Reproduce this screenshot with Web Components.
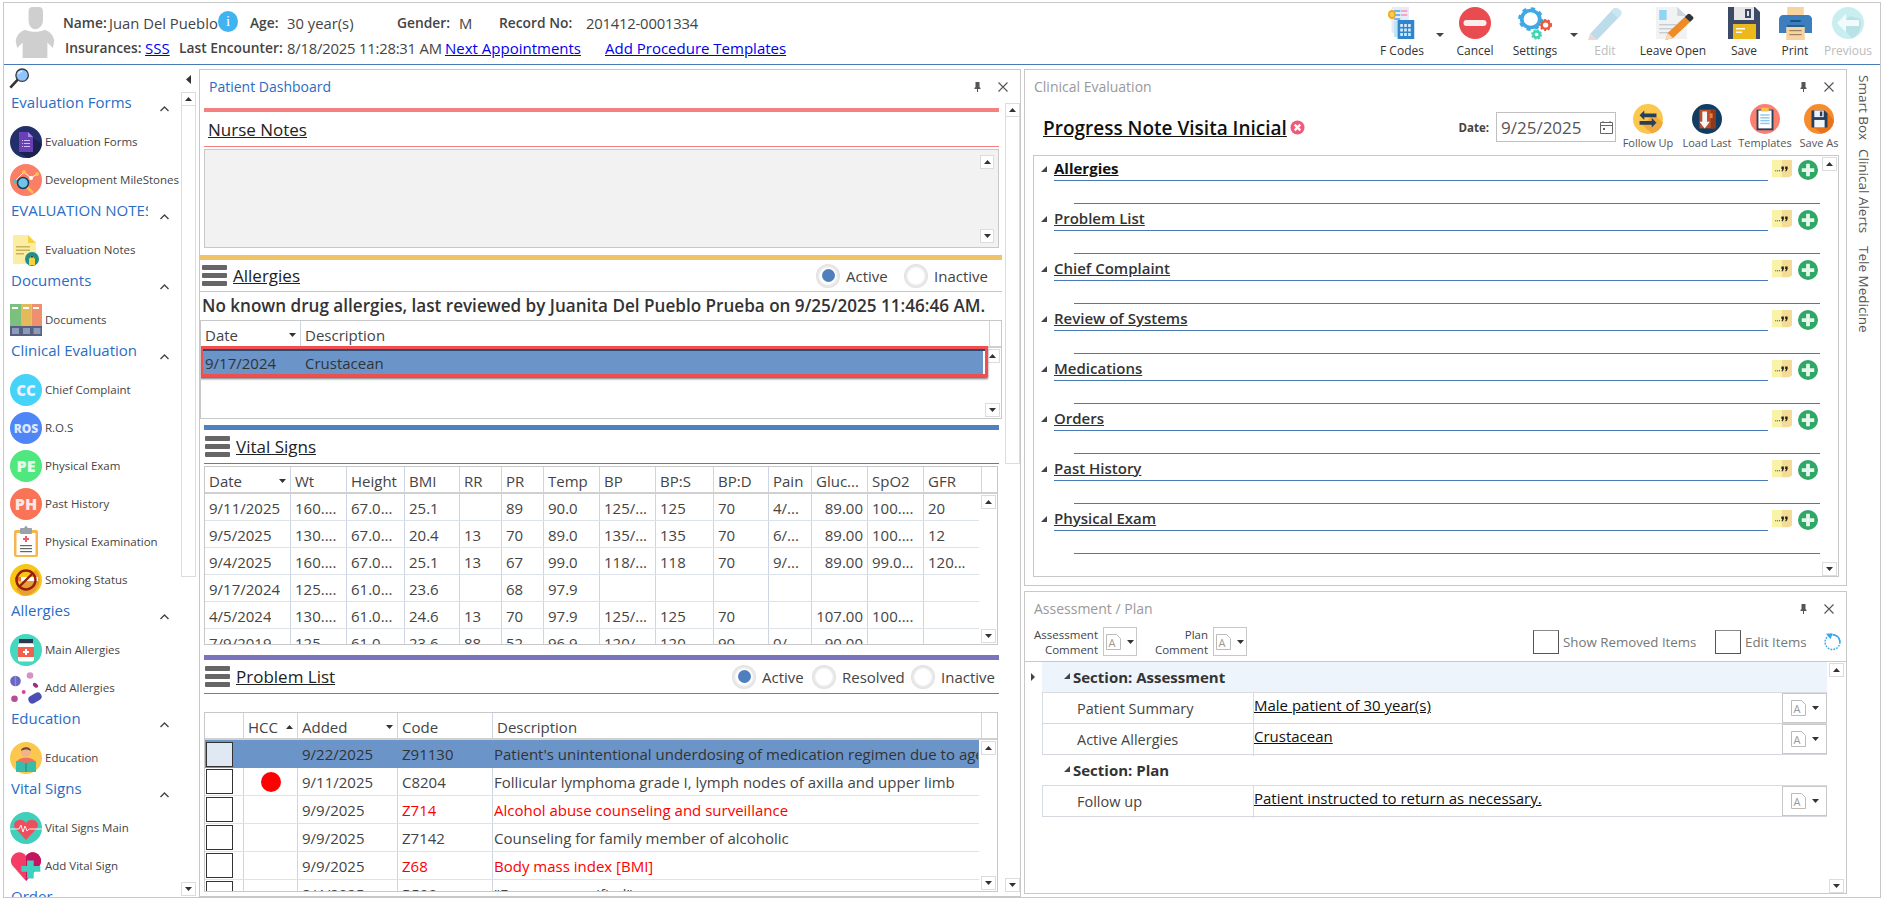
<!DOCTYPE html>
<html>
<head>
<meta charset="utf-8">
<title>Patient Dashboard</title>
<style>
  html, body { margin: 0; padding: 0; background: #fff; }
  body { font-family: "Open Sans", "Liberation Sans", sans-serif; color: #444; width: 1882px; height: 903px; overflow: hidden; }
</style>
</head>
<body>
<app-shell>
  <patient-header slot="header"></patient-header>
  <side-nav slot="nav">
    <nav-group title="Evaluation Forms">
      <nav-item icon="evalforms">Evaluation Forms</nav-item>
      <nav-item icon="milestones">Development MileStones</nav-item>
    </nav-group>
    <nav-group title="EVALUATION NOTES">
      <nav-item icon="notes">Evaluation Notes</nav-item>
    </nav-group>
    <nav-group title="Documents">
      <nav-item icon="docs">Documents</nav-item>
    </nav-group>
    <nav-group title="Clinical Evaluation">
      <nav-item icon="cc">Chief Complaint</nav-item>
      <nav-item icon="ros">R.O.S</nav-item>
      <nav-item icon="pe">Physical Exam</nav-item>
      <nav-item icon="ph">Past History</nav-item>
      <nav-item icon="clip">Physical Examination</nav-item>
      <nav-item icon="smoke">Smoking Status</nav-item>
    </nav-group>
    <nav-group title="Allergies">
      <nav-item icon="bottle">Main Allergies</nav-item>
      <nav-item icon="pills">Add Allergies</nav-item>
    </nav-group>
    <nav-group title="Education">
      <nav-item icon="edu">Education</nav-item>
    </nav-group>
    <nav-group title="Vital Signs">
      <nav-item icon="vital">Vital Signs Main</nav-item>
      <nav-item icon="addvital">Add Vital Sign</nav-item>
    </nav-group>
    <nav-group title="Order"></nav-group>
  </side-nav>

  <dock-panel slot="center" title="Patient Dashboard" active style="height:828px">
    <patient-dashboard></patient-dashboard>
  </dock-panel>

  <div slot="right" style="display:flex;flex-direction:column;gap:5px">
    <dock-panel title="Clinical Evaluation" style="height:517px">
      <clinical-eval></clinical-eval>
    </dock-panel>
    <dock-panel title="Assessment / Plan" style="height:303px">
      <assessment-plan></assessment-plan>
    </dock-panel>
  </div>

  <side-tabs slot="tabs"></side-tabs>
</app-shell>

<script>
const ICONS = {
  evalforms: `<circle cx="16" cy="16" r="16" fill="#232e6b"/><path d="M23 12L32 18A16 16 0 0 1 18 32L9 26Z" fill="#1a2250"/><path d="M9 6h9l5 5v15H9z" fill="#6a3fb8"/><path d="M18 6l5 5h-5z" fill="#a58ae6"/><g fill="#cfc3f0"><rect x="14" y="14" width="6" height="1"/><rect x="14" y="17" width="6" height="1"/><rect x="14" y="20" width="6" height="1"/><rect x="12" y="14" width="1" height="1"/><rect x="12" y="17" width="1" height="1"/><rect x="12" y="20" width="1" height="1"/></g>`,
  milestones: `<circle cx="16" cy="16" r="16" fill="#fa7f66"/><polyline points="5,17 14,8 21,14 27,10" fill="none" stroke="#fff" stroke-width="1"/><circle cx="5" cy="17" r="2" fill="#3fc7c0"/><circle cx="14" cy="8" r="2" fill="#f6c34d"/><circle cx="21" cy="14" r="2" fill="#fff"/><circle cx="27" cy="10" r="2" fill="#f6c34d"/><line x1="17" y1="23" x2="23" y2="29" stroke="#f6c34d" stroke-width="2.5"/><circle cx="13" cy="19" r="5.5" fill="#6cc5ea" stroke="#1f3b5c" stroke-width="1.5"/>`,
  notes: `<path d="M3 1h15l8 8v21H3z" fill="#fbeda4"/><path d="M18 1l8 8h-8z" fill="#f6d33e"/><g fill="#c9b35c"><rect x="6" y="12" width="14" height="1.5"/><rect x="6" y="15.5" width="14" height="1.5"/><rect x="6" y="19" width="8" height="1.5"/></g><circle cx="22" cy="25" r="7" fill="#1f8f8a"/><path d="M19 31v-6l3-4 3 4v6z" fill="#f6d33e"/><path d="M20.5 23.5L22 21l1.500 2.500z" fill="#333"/>`,
  docs: `<rect x="0" y="0" width="11" height="32" fill="#7cc07f"/><rect x="11" y="0" width="10.500" height="32" fill="#e3b95c"/><rect x="21.500" y="0" width="10.500" height="32" fill="#ee8f6d"/><g fill="#fff"><rect x="2" y="3" width="6" height="2"/><rect x="13" y="3" width="6" height="2"/><rect x="23" y="3" width="6" height="2"/></g><rect x="0" y="22" width="32" height="10" fill="#55617f"/><g fill="#8d9abb"><rect x="2" y="24" width="7" height="6"/><rect x="13" y="24" width="7" height="6"/><rect x="23.500" y="24" width="7" height="6"/></g>`,
  cc: `<circle cx="16" cy="16" r="16" fill="#45d3f7"/><text x="16" y="21.500" text-anchor="middle" font-family="Open Sans" font-weight="800" font-size="15" fill="#eef">CC</text>`,
  ros: `<circle cx="16" cy="16" r="16" fill="#4f86f7"/><text x="16" y="20.500" text-anchor="middle" font-family="Open Sans" font-weight="800" font-size="12" fill="#dfe8f8">ROS</text>`,
  pe: `<circle cx="16" cy="16" r="16" fill="#4fe87f"/><text x="16" y="22" text-anchor="middle" font-family="Open Sans" font-weight="800" font-size="16" fill="#e8f8ec">PE</text>`,
  ph: `<circle cx="16" cy="16" r="16" fill="#f97457"/><text x="16" y="22" text-anchor="middle" font-family="Open Sans" font-weight="800" font-size="16" fill="#f8e8e4">PH</text>`,
  clip: `<rect x="4" y="4" width="24" height="27" rx="2" fill="#f6b64b"/><rect x="6.500" y="7" width="19" height="22" fill="#fff"/><rect x="10" y="2" width="12" height="6" rx="1" fill="#9aa1a8"/><circle cx="16" cy="1.500" r="1.500" fill="#9aa1a8"/><path d="M15 10h2v2h2v2h-2v2h-2v-2h-2v-2h2z" fill="#ee5a6c"/><g fill="#666"><rect x="10" y="19" width="12" height="1.200"/><rect x="10" y="22" width="12" height="1.200"/><rect x="10" y="25" width="12" height="1.200"/></g>`,
  smoke: `<circle cx="16" cy="16" r="16" fill="#f8c617"/><path d="M27 7A16 16 0 0 1 12 31.500L6 25 25 6Z" fill="#e9a032"/><rect x="5" y="13" width="23" height="4" fill="#fff"/><rect x="5" y="13" width="6" height="4" fill="#e8703a"/><circle cx="16" cy="16" r="9.500" fill="none" stroke="#96200a" stroke-width="2.400"/><line x1="9" y1="23" x2="23" y2="9" stroke="#96200a" stroke-width="2.400"/>`,
  bottle: `<circle cx="16" cy="16" r="16" fill="#45d8bf"/><rect x="9" y="5" width="14" height="4" fill="#2b3a50"/><rect x="8" y="9.500" width="16" height="18" rx="2" fill="#fff"/><rect x="8" y="13" width="16" height="10" fill="#f2614e"/><path d="M15 15h2v2h2v2h-2v2h-2v-2h-2v-2h2z" fill="#fff"/>`,
  pills: `<circle cx="5.500" cy="9" r="5.300" fill="#6a66c4"/><rect x="4.800" y="4" width="1.400" height="10" fill="#8f8bd8"/><circle cx="20" cy="3.500" r="3.300" fill="#d990c4"/><ellipse cx="25.500" cy="13.300" rx="3" ry="2" transform="rotate(35 25.500 13.300)" fill="#9c2f7e"/><circle cx="13.700" cy="20" r="2" fill="#e0409c"/><circle cx="4.500" cy="26.700" r="3.300" fill="#b54f94"/><rect x="18" y="22" width="14" height="8" rx="4" transform="rotate(-30 25 26)" fill="#4a4eb5"/>`,
  edu: `<circle cx="16" cy="16" r="16" fill="#fbc84d"/><path d="M6 21c2-7 18-7 20 0v7H6z" fill="#ee6f5e"/><circle cx="16" cy="10" r="5" fill="#f2b28c"/><path d="M11 9c0-5 10-5 10 0-3-2-7-2-10 0z" fill="#6e4a32"/><path d="M6 19l10 2 10-2v11H6z" fill="#37bda9"/><rect x="15.500" y="21" width="1" height="9" fill="#22877a"/>`,
  vital: `<circle cx="16" cy="16" r="16" fill="#3fcfba"/><path d="M16 28L5 16c-4-6 6-12 11-5 5-7 15-1 11 5z" fill="#ee4f5e"/><polyline points="0,17 9,17 11,13 13,20 15,14 17,19 19,17 32,17" fill="none" stroke="#fff" stroke-width=".9"/>`,
  addvital: `<path d="M16 31L2 15C-3 6 10-3 16 6 22-3 35 6 30 15z" fill="#f53c66"/><path d="M16 31V6C22-3 35 6 30 15z" fill="#c4135f"/><path d="M19 12h7v6h7v6h-7v7h-7v-7h-6v-6h6z" transform="translate(-1 -1) scale(.95)" fill="#3fd1bf"/>`,

  fcodes: `<rect x="4" y="0" width="20" height="26" fill="#e6ecf7"/><g fill="#f6a7c6"><rect x="15" y="3" width="7" height="2"/><rect x="15" y="7" width="7" height="2"/></g><g fill="#6cb8ea"><rect x="7" y="3" width="7" height="2"/><rect x="7" y="7" width="7" height="2"/><rect x="7" y="11" width="7" height="2"/></g><rect x="7" y="14" width="7" height="16" fill="#bfe3f7"/><rect x="11" y="13" width="19" height="19" fill="#2f86cf"/><g fill="#d6ecfa"><rect x="14" y="17" width="3" height="3"/><rect x="18.500" y="17" width="3" height="3"/><rect x="23" y="17" width="3" height="3"/><rect x="14" y="21.500" width="3" height="3"/><rect x="18.500" y="21.500" width="3" height="3"/><rect x="23" y="21.500" width="3" height="3"/><rect x="14" y="26" width="3" height="3"/><rect x="18.500" y="26" width="3" height="3"/><rect x="23" y="26" width="3" height="3"/></g><circle cx="4.500" cy="7.500" r="4.500" fill="#f2a71b"/><circle cx="4.500" cy="7.500" r="2.500" fill="#fbd35a"/>`,
  cancel: `<circle cx="16" cy="16" r="16" fill="#ea4b50"/><rect x="4.500" y="13" width="23" height="6" rx="3" fill="#fdecec"/>`,
  settings: `<circle cx="12" cy="12" r="8.500" fill="none" stroke="#3fa9e8" stroke-width="3.500" /><circle cx="12" cy="12" r="10.500" fill="none" stroke="#3fa9e8" stroke-width="2.600" stroke-dasharray="4 4.200"/><circle cx="26" cy="18" r="3.800" fill="none" stroke="#e8583f" stroke-width="2.500"/><circle cx="26" cy="18" r="5.300" fill="none" stroke="#e8583f" stroke-width="1.500" stroke-dasharray="2 1.800"/><circle cx="17.500" cy="27.500" r="3" fill="none" stroke="#3fd4b0" stroke-width="2.400"/><circle cx="17.500" cy="27.500" r="4.500" fill="none" stroke="#3fd4b0" stroke-width="1.300" stroke-dasharray="2 1.500"/>`,
  edit: `<path d="M1 27L24 2c2-2 5-1 7 1s2 4 0 6L8 33z" fill="#bcdcea"/><path d="M24 2c2-2 5-1 7 1s2 4 0 6l-2 2-7-7z" fill="#c9e6f2"/><path d="M1 27l7 6-9 0z" fill="#ecd9d0"/>`,
  leaveopen: `<path d="M0 0h20l9 9v23H0z" fill="#f0f2f4"/><path d="M20 0l9 9h-9z" fill="#cfd6dc"/><rect x="3" y="3" width="7" height="10" fill="#8fd4f5"/><g fill="#c6ccd2"><rect x="3" y="17" width="16" height="1.400"/><rect x="3" y="21" width="14" height="1.400"/><rect x="3" y="25" width="10" height="1.400"/></g><path d="M9 33l2-7L27 10l5 5-16 16z" fill="#f08a24"/><path d="M27 10l2.500-2.500c1-1 2-1 3 0l2 2c1 1 1 2 0 3L32 15z" fill="#333"/><path d="M9 33l2-7 5 5z" fill="#f6d9b5"/>`,
  save: `<path d="M0 0h27l5 5v27H0z" fill="#3c4a68"/><rect x="6" y="0" width="20" height="13" fill="#e6e6e6"/><rect x="17" y="2" width="6" height="9" fill="#3c4a68"/><rect x="19" y="4" width="2" height="5" fill="#e6e6e6"/><rect x="5" y="17" width="23" height="15" fill="#ebb91c"/><g fill="#fff"><rect x="8" y="21" width="9" height="1.500"/><rect x="8" y="24.500" width="6" height="1.500"/></g>`,
  print: `<rect x="8" y="0" width="16" height="13" fill="#f7d3a0"/><path d="M0 12c0-2 2-4 4-4h24c2 0 4 2 4 4v14H0z" fill="#3d7ebf"/><rect x="11" y="13" width="10" height="2" fill="#1c4f83"/><rect x="7" y="18" width="18" height="15" fill="#f7d3a0"/><rect x="7" y="18" width="18" height="2" fill="#2a5f96"/><g fill="#9a8463"><rect x="10" y="23" width="12" height="1.200"/><rect x="10" y="27" width="12" height="1.200"/></g>`,
  previous: `<circle cx="16" cy="16" r="16" fill="#c9eef0"/><path d="M28 12A16 16 0 0 1 20 31.500L8 18 18 9Z" fill="#b9e2e6"/><path d="M14 7L5 16l9 9v-6h13v-6H14z" fill="#f2fbfc"/>`,
  followup: `<circle cx="16" cy="16" r="16" fill="#fcc74f"/><path d="M22 11L32 20A16 16 0 0 1 20 31.500L10 22Z" fill="#efa93c"/><path d="M12 7L7 12l5 5v-3h13v-4H12z" fill="#24405c"/><path d="M20 15l5 5-5 5v-3H7v-4h13z" fill="#24405c"/>`,
  loadlast: `<circle cx="16" cy="16" r="16" fill="#123d63"/><rect x="8" y="6" width="17" height="20" fill="#b9502a"/><rect x="20" y="6" width="5" height="20" fill="#8d3a1e"/><rect x="19" y="10" width="3" height="5" fill="#ef7d3b"/><path d="M11 8h5v11h3l-5.500 7L8 19h3z" fill="#f4f6f8"/>`,
  templates: `<circle cx="16" cy="16" r="16" fill="#fb8070"/><rect x="7" y="6" width="18" height="22" fill="#24405c"/><rect x="9" y="7" width="14" height="19" fill="#fff"/><rect x="12" y="4" width="8" height="4" fill="#f6c34d"/><g fill="#8cc8ee"><rect x="11" y="11" width="10" height="1.500"/><rect x="11" y="14" width="10" height="1.500"/><rect x="11" y="17" width="10" height="1.500"/><rect x="11" y="20" width="10" height="1.500"/></g>`,
  saveas: `<circle cx="16" cy="16" r="16" fill="#f78c2e"/><path d="M24 8L32 18A16 16 0 0 1 19 31.700L9 24Z" fill="#e8731d"/><path d="M8 7h14l3 3v15H8z" fill="#24405c"/><rect x="11" y="7" width="10" height="7" fill="#eef"/><rect x="17" y="8" width="2.500" height="5" fill="#24405c"/><rect x="11" y="17" width="11" height="8" fill="#f5f5f5"/>`,
  plus: `<circle cx="16" cy="16" r="16" fill="#2fa866"/><path d="M13 6h6v7h7v6h-7v7h-6v-7H6v-6h7z" fill="#e8f6ee"/>`,
  quote: `<path d="M0 0h16v29H0z" fill="#f9f3a9"/><path d="M16 0h16v26l-5 3H16z" fill="#f4dc96"/><g fill="#222"><circle cx="6" cy="18" r=".9"/><circle cx="9" cy="18" r=".9"/><circle cx="12" cy="18" r=".9"/><path d="M15 11h4v4l-2 4h-2l1.500-4H15z"/><path d="M21 11h4v4l-2 4h-2l1.500-4H21z"/></g>`,
  xcircle: `<circle cx="16" cy="16" r="15" fill="#f05a78"/><path d="M10 10l12 12M22 10L10 22" stroke="#fff" stroke-width="5"/>`,
  refresh: `<circle cx="16" cy="17" r="12.500" fill="none" stroke="#3aa8e8" stroke-width="2.400" stroke-dasharray="3 2"/><path d="M16 4.500A12.500 12.500 0 0 1 28.500 17" fill="none" stroke="#3aa8e8" stroke-width="2.400"/><path d="M5 3l11-1-3 10z" fill="#3aa8e8"/>`,
  search: `<line x1="2" y1="30" x2="14" y2="17" stroke="#333" stroke-width="4"/><circle cx="20" cy="11" r="9.500" fill="#8ec5ff" stroke="#3a3a3a" stroke-width="2"/><path d="M14 9a7 7 0 0 1 6-4" stroke="#e6f2ff" stroke-width="2" fill="none"/>`,
  avatar: `<path d="M9 0c-2 0-3 1-3 3v6c0 4 3 6 4.500 6S16 13 16 9V3c0-2-1-3-3-3z" transform="translate(5 0) scale(1.050)" fill="#cfcfcf"/><path d="M2 25c0-3 3-7 7-8 4 2 10 2 14 0 4 1 7 5 7 8l-1 5-4-4v11H7V26l-4 4z" transform="translate(0 -1)" fill="#cfcfcf"/>`
};

// every custom element below gets its shadow root from this
class UiElement extends HTMLElement {
  constructor() {
    super();
    this.attachShadow({ mode: 'open' });
    this.shadowRoot.innerHTML = `<style>${this.constructor.css}</style>${this.constructor.html}`;
  }
}

class AppIcon extends UiElement {
  static css = `:host { display: inline-flex; flex: none; } svg { display: block; overflow: visible; }`;
  static html = `<div></div>`;
  static get observedAttributes() { return ['name', 'w', 'h']; }
  attributeChangedCallback() {
    const name = this.getAttribute('name');
    if (!name) return;
    const w = this.getAttribute('w') || 32;
    const h = this.getAttribute('h') || w;
    const vb = name === 'avatar' ? '0 0 32 36' : '0 0 32 32';
    this.shadowRoot.querySelector('div').innerHTML = `<svg width="${w}" height="${h}" viewBox="${vb}" preserveAspectRatio="none">${ICONS[name]}</svg>`;
  }
}

class ScrollBar extends UiElement {
  static css = `
    :host { display: flex; flex-direction: column; width: 15px; flex: none; box-sizing: border-box; }
    .btn { height: 14px; flex: none; background: #fff; border: 1px solid #dcdcdc; box-sizing: border-box; display: flex; align-items: center; justify-content: center; }
    .btn svg { display: block; }
    .thumb { flex: none; border: 1px solid #dcdcdc; border-top: 0; box-sizing: border-box; background: #fff; }
    .rest { flex: 1; }
  `;
  static html = `
    <div class="btn"><svg width="7" height="4"><path d="M3.500 0L7 4H0z" fill="#333"/></svg></div>
    <div class="thumb"></div>
    <div class="rest"></div>
    <div class="btn"><svg width="7" height="4"><path d="M0 0h7L3.500 4z" fill="#333"/></svg></div>
  `;
  static get observedAttributes() { return ['thumb']; }
  attributeChangedCallback() {
    const t = this.shadowRoot.querySelector('.thumb');
    t.style.height = this.getAttribute('thumb') + 'px';
  }
  connectedCallback() {
    if (!this.getAttribute('thumb')) this.shadowRoot.querySelector('.thumb').style.border = '0';
  }
}

class AppShell extends UiElement {
  static css = `
    :host { display: block; margin: 2px 0 0 3px; width: 1878px; height: 896px; box-sizing: border-box; border: 1px solid #c8c8c8; overflow: hidden; background: #fff; }
    .hdr { height: 61px; border-bottom: 1px solid #4a7ab5; }
    .main { display: flex; height: 832px; }
    .nav { width: 195px; flex: none; }
    .center { width: 822px; flex: none; margin-top: 4px; }
    .right { width: 823px; flex: none; margin-top: 4px; margin-left: 3px; }
    .tabs { flex: 1; }
  `;
  static html = `
    <div class="hdr"><slot name="header"></slot></div>
    <div class="main">
      <div class="nav"><slot name="nav"></slot></div>
      <div class="center"><slot name="center"></slot></div>
      <div class="right"><slot name="right"></slot></div>
      <div class="tabs"><slot name="tabs"></slot></div>
    </div>
  `;
}

class ToolButton extends UiElement {
  static css = `
    :host { display: flex; flex-direction: column; align-items: center; box-sizing: border-box; padding-top: 4px; font-size: 12px; color: #333; }
    :host([off]) { color: #bbb; }
    .lbl { margin-top: 4px; line-height: 16px; white-space: nowrap; }
  `;
  static html = `<app-icon></app-icon><div class="lbl"><slot></slot></div>`;
  connectedCallback() {
    const i = this.shadowRoot.querySelector('app-icon');
    i.setAttribute('w', this.getAttribute('w') || 32);
    i.setAttribute('h', this.getAttribute('h') || 32);
    i.setAttribute('name', this.getAttribute('icon'));
  }
}

class PatientHeader extends UiElement {
  static css = `
    :host { display: flex; height: 61px; font-size: 14.800px; color: #444; }
    .avatar { width: 59px; flex: none; padding: 4px 0 0 9px; box-sizing: border-box; }
    .info { flex: 1; padding-top: 7px; }
    .row { display: grid; height: 25px; align-items: center; white-space: nowrap; }
    .r1 { grid-template-columns: 46px 109px 32px 37px 110px 62px 40px 87px auto; }
    .r2 { grid-template-columns: 80px 34px 108px 158px 160px auto; margin-left: 2px; }
    b { font-weight: 600; color: #444; font-size: 13.800px; }
    a { color: #00e; text-decoration: underline; font-size: 15px; }
    .nums { letter-spacing: -.2px; }
    .i { display: flex; width: 20px; height: 21px; border-radius: 50%; background: #3fb4f0; color: #fff; align-items: center; justify-content: center; font-size: 15px; margin-top: -3px; font-family: "Liberation Serif", serif; }
    .tools { display: grid; grid-template-columns: 56px 20px 50px 70px 8px 54px 82px 60px 42px 64px; flex: none; width: 506px; }
    .caret { display: flex; justify-content: center; padding-top: 30px; }
    .caret svg { display: block; }
  `;
  static html = `
    <div class="avatar"><app-icon name="avatar" w="44" h="51"></app-icon></div>
    <div class="info">
      <div class="row r1">
        <b>Name:</b><span>Juan Del Pueblo</span><span class="i">i</span>
        <b>Age:</b><span>30 year(s)</span>
        <b>Gender:</b><span>M</span>
        <b>Record No:</b><span class="nums">201412-0001334</span>
      </div>
      <div class="row r2">
        <b>Insurances:</b><a>SSS</a>
        <b>Last Encounter:</b><span class="nums">8/18/2025 11:28:31 AM</span>
        <a>Next Appointments</a><a>Add Procedure Templates</a>
      </div>
    </div>
    <div class="tools">
      <tool-button icon="fcodes" w="28">F Codes</tool-button>
      <div class="caret"><svg width="8" height="4"><path d="M0 0h8L4 4z" fill="#444"/></svg></div>
      <tool-button icon="cancel">Cancel</tool-button>
      <tool-button icon="settings" w="34">Settings</tool-button>
      <div class="caret"><svg width="8" height="4"><path d="M0 0h8L4 4z" fill="#444"/></svg></div>
      <tool-button icon="edit" off>Edit</tool-button>
      <tool-button icon="leaveopen" w="34">Leave Open</tool-button>
      <tool-button icon="save">Save</tool-button>
      <tool-button icon="print" w="33">Print</tool-button>
      <tool-button icon="previous" off>Previous</tool-button>
    </div>
  `;
}

class SideNav extends UiElement {
  static css = `
    :host { display: flex; flex-direction: column; height: 832px; }
    .top { height: 27px; display: flex; align-items: center; justify-content: space-between; padding: 0 8px 0 5px; flex: none; }
    .body { display: flex; flex: 1; min-height: 0; }
    .list { width: 177px; flex: none; padding-top: 2px; overflow: hidden; box-sizing: border-box; }
    scroll-bar { height: 804px; }
  `;
  static html = `
    <div class="top">
      <app-icon name="search" w="21" h="21"></app-icon>
      <svg width="5" height="9" style="margin-top:1px"><path d="M5 0v9L0 4.500z" fill="#333"/></svg>
    </div>
    <div class="body">
      <div class="list"><slot></slot></div>
      <scroll-bar thumb="471"></scroll-bar>
    </div>
  `;
}

class NavGroup extends UiElement {
  static css = `
    :host { display: block; }
    .head { height: 32px; display: flex; align-items: flex-start; padding-left: 7px; }
    .t { width: 137px; overflow: hidden; white-space: nowrap; font-size: 15px; line-height: 20px; margin-top: -2px; color: #2b6cc4; }
    svg { margin: 12px 0 0 12px; }
  `;
  static html = `
    <div class="head"><div class="t"></div><svg width="9" height="6"><path d="M.5 5L4.500 1l4 4" fill="none" stroke="#444" stroke-width="1.400"/></svg></div>
    <slot></slot>
  `;
  connectedCallback() { this.shadowRoot.querySelector('.t').textContent = this.getAttribute('title'); this.removeAttribute('title'); }
}

class NavItem extends UiElement {
  static css = `
    :host { display: flex; align-items: flex-start; height: 38px; padding-left: 6px; font-size: 11.500px; color: #444; white-space: nowrap; }
    .l { margin-left: 3px; line-height: 32px; }
  `;
  static html = `<app-icon></app-icon><div class="l"><slot></slot></div>`;
  connectedCallback() { this.shadowRoot.querySelector('app-icon').setAttribute('name', this.getAttribute('icon')); }
}

class DockPanel extends UiElement {
  static css = `
    :host { display: flex; flex-direction: column; box-sizing: border-box; border: 1px solid #c8c8c8; background: #fff; overflow: hidden; }
    .title { height: 33px; flex: none; display: flex; align-items: center; padding: 0 12px 0 9px; font-size: 14px; color: #999; }
    :host([active]) .title { color: #2b6cc4; }
    .t { flex: 1; }
    svg { display: block; }
    .pin { margin-right: 17px; }
    .body { flex: 1; min-height: 0; }
  `;
  static html = `
    <div class="title"><div class="t"></div>
      <svg class="pin" width="7" height="10"><path d="M1.500 0h4v5l1 1v1H4v3H3V7H.5V6l1-1z" fill="#555"/></svg>
      <svg width="10" height="10"><path d="M.5.5l9 9M9.500.5l-9 9" stroke="#555" stroke-width="1.100"/></svg>
    </div>
    <div class="body"><slot></slot></div>
  `;
  connectedCallback() { this.shadowRoot.querySelector('.t').textContent = this.getAttribute('title'); this.removeAttribute('title'); }
}

class RadioOpt extends UiElement {
  static css = `
    :host { display: flex; align-items: center; font-size: 15px; color: #444; }
    .r { width: 24px; height: 24px; border-radius: 50%; margin-right: 6px; display: flex; align-items: center; justify-content: center; background: radial-gradient(circle, #fff 45%, #ececec 55%, #dcdcdc 75%, #efefef 100%); flex: none; }
    .d { width: 13px; height: 13px; border-radius: 50%; background: #fff; }
    :host([on]) .d { background: #4f7fbd; }
  `;
  static html = `<div class="r"><div class="d"></div></div><slot></slot>`;
}

class SectionHead extends UiElement {
  static css = `
    :host { display: block; }
    .bar { height: var(--bar, 5px); background: var(--c); }
    .row { display: flex; align-items: center; border-bottom: 1px solid var(--c); height: var(--h, 31px); padding-left: var(--pl, 1px); }
    .menu { width: 25px; height: 21px; margin-right: 6px; display: flex; flex-direction: column; justify-content: space-between; flex: none; }
    .menu i { display: block; height: 5px; background: #666; border-radius: 1px; }
    .t { font-size: 17px; color: #222; text-decoration: underline; flex: 1; }
    .opts { display: flex; }
  `;
  static html = `
    <div class="bar"></div>
    <div class="row">
      <div class="menu"><i></i><i></i><i></i></div>
      <div class="t"></div>
      <div class="opts"><slot></slot></div>
    </div>
  `;
  connectedCallback() {
    this.shadowRoot.querySelector('.t').textContent = this.getAttribute('label');
    if (this.hasAttribute('plain')) this.shadowRoot.querySelector('.menu').style.display = 'none';
  }
}

class DataGrid extends UiElement {
  static css = `
    :host { display: flex; flex-direction: column; box-sizing: border-box; border: 1px solid #c8c8c8; overflow: hidden; background: #fff; }
    .body { display: flex; flex: 1; min-height: 0; position: relative; }
    .rows { flex: 1; min-width: 0; overflow: hidden; }
    scroll-bar { margin: 1px 1px 1px 2px; }
  `;
  static html = `
    <slot name="head"></slot>
    <div class="body">
      <div class="rows"><slot></slot></div>
      <scroll-bar></scroll-bar>
    </div>
  `;
  connectedCallback() {
    this.style.setProperty('--cols', this.getAttribute('cols'));
    const t = this.getAttribute('thumb');
    const sb = this.shadowRoot.querySelector('scroll-bar');
    if (t) sb.setAttribute('thumb', t);
  }
}

class GridRow extends UiElement {
  static css = `
    :host { display: grid; grid-template-columns: var(--cols); height: var(--rh, 27px); box-sizing: border-box; border-bottom: 1px solid #dde3ea; font-size: 15px; color: #444; white-space: nowrap; }
    :host([slot="head"]) { border-bottom: 2px solid #d0d0d0; height: var(--hh, 27px); }
    :host([sel]) { background: #6b95c9; color: #333; border-bottom: 0; }
    .c { display: flex; align-items: center; padding: var(--pt, 2px) 4px 0; overflow: hidden; border-right: 1px solid #cdd6e2; box-sizing: border-box; min-width: 0; }
    :host([sel]) .c { border-right: 0; }
    .r { justify-content: flex-end; }
    .tight { padding-left: 1px; }
    .red { color: #f00; }
    .s { margin-left: auto; flex: none; }
    .box { width: 27px; height: 25px; border: 1px solid #333; box-sizing: border-box; background: #fff; margin-left: -3px; flex: none; }
    :host([sel]) .box { background: #e0e8f4; }
    .dot { width: 20px; height: 20px; background: #f00; border-radius: 50%; margin: 0 auto; }
    .t { overflow: hidden; }
  `;
  static html = ``;
  connectedCallback() {
    const red = this.hasAttribute('red');
    const cells = this.getAttribute('cells').split('|');
    this.shadowRoot.innerHTML += cells.map((raw, i) => {
      if (raw === '[]') return `<div class="c"><div class="box"></div></div>`;
      if (raw === '()') return `<div class="c"><div class="dot"></div></div>`;
      let cls = 'c', txt = raw, tail = '';
      if (raw.startsWith('>')) { cls += ' r'; txt = raw.slice(1); }
      if (raw.startsWith('<')) { cls += ' tight'; txt = raw.slice(1); }
      if (raw.endsWith('^')) { txt = raw.slice(0, -1); tail = '<svg class="s" width="7" height="4"><path d="M3.500 0L7 4H0z" fill="#333"/></svg>'; }
      if (raw.endsWith('~')) { txt = raw.slice(0, -1); tail = '<svg class="s" width="7" height="4"><path d="M0 0h7L3.500 4z" fill="#333"/></svg>'; }
      if (red && i >= 3) cls += ' red';
      return `<div class="${cls}"><span class="t">${txt}</span>${tail}</div>`;
    }).join('');
  }
}

class PatientDashboard extends UiElement {
  static css = `
    :host { display: flex; height: 792px; }
    .col { width: 804px; flex: none; overflow: hidden; }
    .in { margin: 0 5px 0 4px; }
    .nurse { padding-top: 5px; }
    .ta { height: 99px; margin-top: 2px; border: 1px solid #c8c8c8; background: #f2f2f2; box-sizing: border-box; display: flex; justify-content: flex-end; padding: 5px 4px 4px 0; }
    .yl { margin: 7px 2px 0 0; }
    .notice { height: 28px; font-size: 17.100px; font-weight: 600; color: #333; line-height: 28px; padding-left: 2px; white-space: nowrap; }
    .g1 { height: 99px; margin-right: 2px; }
    .g1 grid-row:not([slot]), .g3 grid-row:not([slot]) { --pt: 0px; }
    .hl { position: absolute; left: -1px; top: -2px; right: 13px; height: 31px; border: 3px solid #ef4f4f; box-sizing: border-box; box-shadow: inset 0 2px 0 #2e4a70, 0 2px 2px #777; pointer-events: none; }
    .vs { margin-top: 6px; }
    .g2 { height: 179px; margin: 2px 1px 0 0; }
    .ps { margin-top: 10px; }
    .g3 { height: 180px; margin: 18px 1px 0 0; }
    .outer { margin-left: 1px; height: 789px; }
  `;
  static html = `
    <div class="col">
      <div class="in nurse">
        <section-head label="Nurse Notes" plain style="--c:#f58080;--bar:4px;--h:34px;--pl:4px"></section-head>
        <div class="ta"><scroll-bar style="height:88px;width:14px"></scroll-bar></div>
      </div>
      <section-head class="yl" label="Allergies" style="--c:#f0c466;--pl:2px">
        <radio-opt on style="width:88px">Active</radio-opt>
        <radio-opt style="width:98px">Inactive</radio-opt>
      </section-head>
      <div class="notice">No known drug allergies, last reviewed by Juanita Del Pueblo Prueba on 9/25/2025 11:46:46 AM.</div>
      <data-grid class="g1" cols="100px 689px" style="--hh:27px;--rh:30px">
        <grid-row slot="head" cells="Date~|Description"></grid-row>
        <grid-row sel cells="9/17/2024|Crustacean"></grid-row>
        <div class="hl"></div>
      </data-grid>
      <div class="in vs">
        <section-head label="Vital Signs" style="--c:#4f80c0;--h:33px"></section-head>
        <data-grid class="g2" thumb="96" cols="86px 56px 58px 55px 42px 42px 56px 56px 58px 55px 43px 56px 56px 58px">
          <grid-row slot="head" cells="Date~|Wt|Height|BMI|RR|PR|Temp|BP|BP:S|BP:D|Pain|Gluc...|SpO2|GFR"></grid-row>
          <grid-row cells="9/11/2025|160....|67.0...|25.1||89|90.0|125/...|125|70|4/...|>89.00|100....|20"></grid-row>
          <grid-row cells="9/5/2025|130....|67.0...|20.4|13|70|89.0|135/...|135|70|6/...|>89.00|100....|12"></grid-row>
          <grid-row cells="9/4/2025|160....|67.0...|25.1|13|67|99.0|118/...|118|70|9/...|>89.00|99.0...|120..."></grid-row>
          <grid-row cells="9/17/2024|125....|61.0...|23.6||68|97.9||||||| "></grid-row>
          <grid-row cells="4/5/2024|130....|61.0...|24.6|13|70|97.9|125/...|125|70||>107.00|100....|"></grid-row>
          <grid-row cells="7/9/2019|125....|61.0...|23.6|88|52|96.9|120/...|120|90|0/...|>90.00||"></grid-row>
        </data-grid>
      </div>
      <div class="in ps">
        <section-head label="Problem List" style="--c:#7a74bd;--h:33px">
          <radio-opt on style="width:80px">Active</radio-opt>
          <radio-opt style="width:99px">Resolved</radio-opt>
          <radio-opt style="width:88px">Inactive</radio-opt>
        </section-head>
        <data-grid class="g3" thumb="30" cols="39px 54px 100px 95px 489px" style="--rh:28px">
          <grid-row slot="head" cells="|HCC^|Added~|Code|Description"></grid-row>
          <grid-row sel cells="[]||9/22/2025|Z91130|<Patient's unintentional underdosing of medication regimen due to age-related debility"></grid-row>
          <grid-row cells="[]|()|9/11/2025|C8204|<Follicular lymphoma grade I, lymph nodes of axilla and upper limb"></grid-row>
          <grid-row red cells="[]||9/9/2025|Z714|<Alcohol abuse counseling and surveillance"></grid-row>
          <grid-row cells="[]||9/9/2025|Z7142|<Counseling for family member of alcoholic"></grid-row>
          <grid-row red cells="[]||9/9/2025|Z68|<Body mass index [BMI]"></grid-row>
          <grid-row cells="[]||8/4/2025|R509|<&quot;Fever, unspecified&quot;"></grid-row>
        </data-grid>
      </div>
    </div>
    <div class="outer"><scroll-bar thumb="347" style="height:789px"></scroll-bar></div>
  `;
}

class EvalSection extends UiElement {
  static css = `
    :host { display: block; height: 50px; box-sizing: border-box; }
    .top { display: flex; height: 24px; }
    .tri { width: 20px; flex: none; padding: 10px 0 0 7px; box-sizing: border-box; }
    .tri svg { display: block; }
    .head { width: 714px; height: 25px; border-bottom: 1px solid #4a7ab5; box-sizing: border-box; font-size: 15px; font-weight: 600; line-height: 24px; color: #333; flex: none; }
    :host([strong]) .head { color: #111; font-weight: 700; }
    .head span { text-decoration: underline; }
    .ic { display: flex; margin-left: 4px; gap: 6px; margin-top: 4px; }
    .line { margin: 23px 0 0 40px; border-top: 1px solid #4a7ab5; width: 746px; }
  `;
  static html = `
    <div class="top">
      <div class="tri"><svg width="6" height="6"><path d="M6 0v6H0z" fill="#444"/></svg></div>
      <div class="head"><span></span></div>
      <div class="ic"><app-icon name="quote" w="20" h="19"></app-icon><app-icon name="plus" w="20" h="20"></app-icon></div>
    </div>
    <div class="line"></div>
  `;
  connectedCallback() { this.shadowRoot.querySelector('span').textContent = this.getAttribute('label'); }
}

class ClinicalEval extends UiElement {
  static css = `
    :host { display: flex; flex-direction: column; height: 483px; }
    .head { display: flex; height: 52px; flex: none; padding: 1px 2px 0 18px; box-sizing: border-box; }
    .doc { font-size: 19px; font-weight: 600; color: #111; text-decoration: underline; margin-top: 11px; line-height: 27px; white-space: nowrap; }
    .x { margin: 16px 0 0 3px; }
    .sp { flex: 1; }
    .dl { font-size: 11.500px; font-weight: 700; color: #444; margin: 16px 7px 0 0; line-height: 16px; }
    .date { width: 120px; height: 30px; margin-top: 8px; border: 1px solid #c0c0c0; box-sizing: border-box; display: flex; align-items: center; justify-content: space-between; padding: 0 2px 0 4px; font-size: 17px; color: #555; }
    .date svg { display: block; }
    .acts { display: grid; grid-template-columns: 60px 58px 58px 50px; margin-left: 2px; }
    .act { display: flex; flex-direction: column; align-items: center; font-size: 11px; color: #555; white-space: nowrap; }
    .act div { line-height: 16px; margin-top: 1px; }
    .box { margin: 0 7px 0 8px; height: 422px; border: 1px solid #c8c8c8; box-sizing: border-box; display: flex; }
    .list { width: 788px; flex: none; overflow: hidden; }
    scroll-bar { height: 419px; margin-top: 1px; }
  `;
  static html = `
    <div class="head">
      <div class="doc">Progress Note Visita Inicial</div>
      <app-icon class="x" name="xcircle" w="15" h="15"></app-icon>
      <div class="sp"></div>
      <div class="dl">Date:</div>
      <div class="date">9/25/2025<svg width="13" height="14" viewBox="0 0 13 14"><path d="M.5 2.500h12v11H.5zM.5 5.500h12M3 1v2M10 1v2" fill="none" stroke="#666"/><rect x="3" y="8" width="2" height="2" fill="#666"/></svg></div>
      <div class="acts">
        <div class="act"><app-icon name="followup" w="30" h="30"></app-icon><div>Follow Up</div></div>
        <div class="act"><app-icon name="loadlast" w="30" h="30"></app-icon><div>Load Last</div></div>
        <div class="act"><app-icon name="templates" w="30" h="30"></app-icon><div>Templates</div></div>
        <div class="act"><app-icon name="saveas" w="30" h="30"></app-icon><div>Save As</div></div>
      </div>
    </div>
    <div class="box">
      <div class="list">
        <eval-section strong label="Allergies"></eval-section>
        <eval-section label="Problem List"></eval-section>
        <eval-section label="Chief Complaint"></eval-section>
        <eval-section label="Review of Systems"></eval-section>
        <eval-section label="Medications"></eval-section>
        <eval-section label="Orders"></eval-section>
        <eval-section label="Past History"></eval-section>
        <eval-section label="Physical Exam"></eval-section>
      </div>
      <scroll-bar></scroll-bar>
    </div>
  `;
}

class DocDrop extends UiElement {
  static css = `
    :host { display: flex; align-items: center; justify-content: center; gap: 6px; box-sizing: border-box; border: 1px solid #c8c8c8; width: 34px; height: 29px; flex: none; background: #fff; }
    svg { display: block; }
  `;
  static html = `
    <svg width="15" height="16" viewBox="0 0 15 16"><path d="M.5.5h10l4 4v11H.5z" fill="#fff" stroke="#bbb"/><text x="2.500" y="13" font-family="Open Sans" font-size="11" fill="#999">A</text></svg>
    <svg width="7" height="4"><path d="M0 0h7L3.500 4z" fill="#333"/></svg>
  `;
}

class PlanRow extends UiElement {
  static css = `
    :host { display: grid; grid-template-columns: 210px 529px 45px; height: 31px; box-sizing: border-box; border-left: 1px solid #d4dce4; border-bottom: 1px solid #d4d8dc; font-size: 14.500px; color: #444; }
    .l { padding-left: 34px; line-height: 32px; white-space: nowrap; }
    .v { border-left: 1px solid #d4dce4; color: #111; text-decoration: underline; line-height: 24px; white-space: nowrap; font-size: 15px; }
    doc-drop { width: 45px; height: 30px; }
  `;
  static html = `<div class="l"><slot name="l"></slot></div><div class="v"><slot></slot></div><doc-drop></doc-drop>`;
}

class PlanSection extends UiElement {
  static css = `
    :host { display: flex; align-items: center; height: 31px; box-sizing: border-box; padding-left: 22px; font-size: 15px; font-weight: 700; color: #333; border-bottom: 1px solid #d8dce0; }
    :host([hi]) { background: #edf4fc; }
    svg { margin-right: 3px; margin-top: -3px; display: block; }
  `;
  static html = `<svg width="6" height="6"><path d="M6 0v6H0z" fill="#444"/></svg><slot></slot>`;
}

class AssessmentPlan extends UiElement {
  static css = `
    :host { display: flex; flex-direction: column; height: 269px; }
    .tools { height: 37px; flex: none; display: flex; align-items: flex-start; font-size: 11.500px; color: #444; border-bottom: 1px solid #c8c8c8; padding-top: 2px; box-sizing: border-box; }
    .lb { text-align: right; line-height: 15px; margin-right: 5px; flex: none; }
    .chk { width: 26px; height: 24px; flex: none; box-sizing: border-box; border: 1px solid #555; border-top-color: #888; background: #fff; margin-right: 4px; margin-top: 3px; }
    .ct { font-size: 13.300px; color: #777; white-space: nowrap; margin-top: 6px; }
    .body { display: flex; flex: 1; min-height: 0; }
    .ind { width: 17px; flex: none; padding: 11px 0 0 6px; box-sizing: border-box; }
    .ind svg { display: block; }
    .rows { width: 785px; flex: none; }
    scroll-bar { margin: 1px 0 0 2px; height: 230px; }
  `;
  static html = `
    <div class="tools">
      <div class="lb" style="width:73px">Assessment<br>Comment</div><doc-drop></doc-drop>
      <div class="lb" style="width:71px">Plan<br>Comment</div><doc-drop></doc-drop>
      <div style="width:286px;flex:none"></div>
      <div class="chk"></div><div class="ct" style="width:152px">Show Removed Items</div>
      <div class="chk"></div><div class="ct" style="width:78px">Edit Items</div>
      <app-icon name="refresh" w="19" h="19" style="margin-top:5px"></app-icon>
    </div>
    <div class="body">
      <div class="ind"><svg width="4" height="8"><path d="M0 0l4 4-4 4z" fill="#444"/></svg></div>
      <div class="rows">
        <plan-section hi>Section: Assessment</plan-section>
        <plan-row><span slot="l">Patient Summary</span>Male patient of 30 year(s)</plan-row>
        <plan-row><span slot="l">Active Allergies</span>Crustacean</plan-row>
        <plan-section>Section: Plan</plan-section>
        <plan-row><span slot="l">Follow up</span>Patient instructed to return as necessary.</plan-row>
      </div>
      <scroll-bar></scroll-bar>
    </div>
  `;
}

class SideTabs extends UiElement {
  static css = `
    :host { display: flex; flex-direction: column; align-items: center; padding-top: 10px; font-size: 13.500px; color: #555; }
    div { writing-mode: vertical-rl; white-space: nowrap; }
  `;
  static html = `<div>Smart Box</div><div style="margin-top:9px">Clinical Alerts</div><div style="margin-top:13px">Tele Medicine</div>`;
}

// leaf elements first so nested shadow markup upgrades as it is inserted
customElements.define('app-icon', AppIcon);
customElements.define('scroll-bar', ScrollBar);
customElements.define('tool-button', ToolButton);
customElements.define('radio-opt', RadioOpt);
customElements.define('grid-row', GridRow);
customElements.define('data-grid', DataGrid);
customElements.define('section-head', SectionHead);
customElements.define('nav-item', NavItem);
customElements.define('nav-group', NavGroup);
customElements.define('side-nav', SideNav);
customElements.define('patient-header', PatientHeader);
customElements.define('dock-panel', DockPanel);
customElements.define('patient-dashboard', PatientDashboard);
customElements.define('eval-section', EvalSection);
customElements.define('clinical-eval', ClinicalEval);
customElements.define('doc-drop', DocDrop);
customElements.define('plan-row', PlanRow);
customElements.define('plan-section', PlanSection);
customElements.define('assessment-plan', AssessmentPlan);
customElements.define('side-tabs', SideTabs);
customElements.define('app-shell', AppShell);
</script>
</body>
</html>
